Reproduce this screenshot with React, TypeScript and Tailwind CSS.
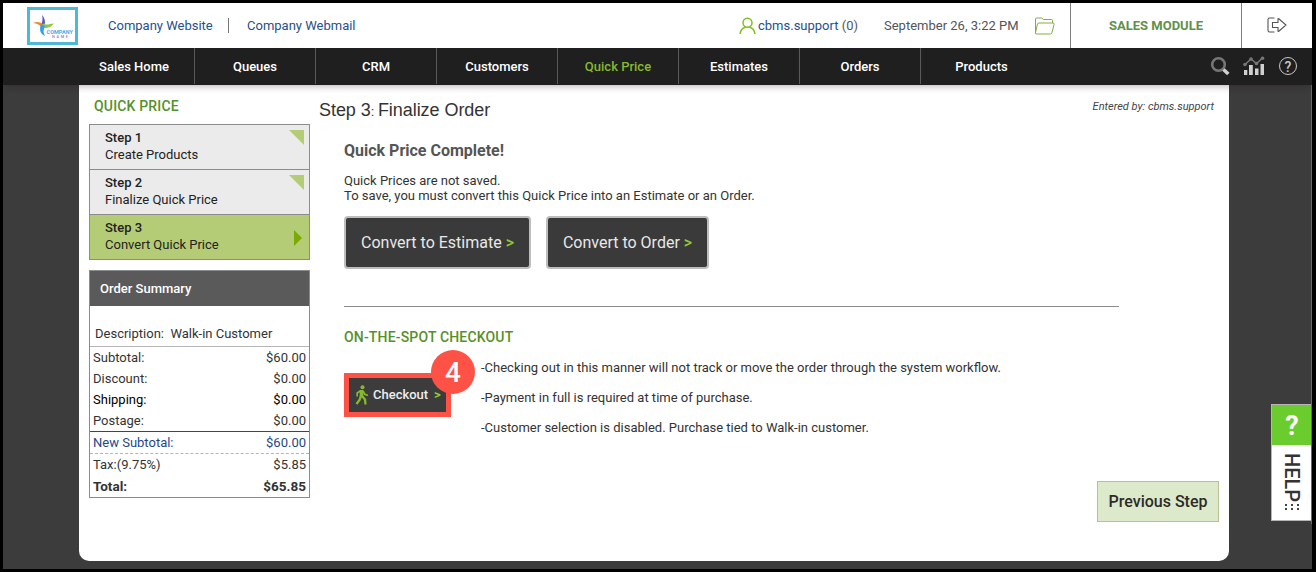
import type { ReactNode } from "react";

type NavItem = { label: string; active?: boolean };

const NAV: NavItem[] = [
  { label: "Sales Home" },
  { label: "Queues" },
  { label: "CRM" },
  { label: "Customers" },
  { label: "Quick Price", active: true },
  { label: "Estimates" },
  { label: "Orders" },
  { label: "Products" },
];

const STEPS = [
  { title: "Step 1", text: "Create Products", current: false },
  { title: "Step 2", text: "Finalize Quick Price", current: false },
  { title: "Step 3", text: "Convert Quick Price", current: true },
];

const CHECKOUT_NOTES = [
  "-Checking out in this manner will not track or move the order through the system workflow.",
  "-Payment in full is required at time of purchase.",
  "-Customer selection is disabled. Purchase tied to Walk-in customer.",
];

export default function App() {
  return (
    <div className="relative flex h-[572px] w-[1316px] flex-col overflow-hidden border-[3px] border-r-4 border-black bg-[#3c3c3c] font-['Roboto',sans-serif] text-[13px] text-[#333]">
      <TopBar />
      <MainNav />
      <main className="ml-[76px] flex h-[476px] w-[1150px] shrink-0 rounded-b-[10px] bg-white pl-[10px]">
        <Sidebar />
        <Content />
      </main>
      <HelpTab />
      <div className="absolute inset-y-[45px] right-0 w-px bg-[#686868]" />
    </div>
  );
}

function TopBar() {
  return (
    <header className="z-20 flex h-[45px] shrink-0 items-center bg-white pl-6">
      <CompanyLogo />
      <a className="ml-[30px] w-[105px] whitespace-nowrap text-[#26508c]">
        Company Website
      </a>
      <div className="mx-[15px] h-[15px] w-px bg-[#777]" />
      <a className="ml-[3px] w-[109px] whitespace-nowrap text-[#26508c]">
        Company Webmail
      </a>
      <div className="ml-auto flex h-full items-center">
        <UserIcon />
        <span className="ml-[2px] w-[126px] whitespace-nowrap text-[#555]">
          <span className="text-[#26508c]">cbms.support</span> (0)
        </span>
        <span className="w-[150px] whitespace-nowrap text-[#555]">
          September 26, 3:22 PM
        </span>
        <FolderIcon />
        <div className="ml-[15px] grid h-full w-[172px] place-items-center border-x border-[#808080] font-bold text-[#5f9148]">
          SALES MODULE
        </div>
        <div className="flex h-full w-[70px] items-center pb-[2px] pl-[25px]">
          <ExitIcon />
        </div>
      </div>
    </header>
  );
}

function MainNav() {
  return (
    <nav className="z-10 flex h-[37px] shrink-0 bg-[#1f1f1f] pl-[71px] text-white shadow-[0_1px_7px_rgba(40,20,30,0.35)]">
      {NAV.map((item, i) => (
        <div
          key={item.label}
          className={`flex h-9 w-[121px] items-center justify-center pt-[2px] font-medium ${
            i < NAV.length - 1 ? "border-r border-[#5a5a5a]" : ""
          } ${item.active ? "text-[#86b92e]" : ""}`}
        >
          {item.label}
        </div>
      ))}
      <div className="ml-auto flex items-center pr-[15px] pb-px">
        <SearchIcon />
        <ChartIcon />
        <HelpIcon />
      </div>
    </nav>
  );
}

function Sidebar() {
  return (
    <aside className="w-[221px] shrink-0">
      <h2 className="mt-3 ml-[5px] h-[27px] text-sm leading-[18px] font-medium tracking-[0.17px] text-[#56902a]">
        QUICK PRICE
      </h2>
      <div className="border border-b-0 border-[#8c8c8c]">
        {STEPS.map((step) => (
          <div
            key={step.title}
            className={`relative h-[45px] border-b border-[#8c8c8c] pt-[4px] pl-[15px] leading-[17px] text-[#222] ${
              step.current ? "bg-[#b5cc76]" : "bg-[#ebebeb]"
            }`}
          >
            <div className="font-medium">{step.title}</div>
            <div>{step.text}</div>
            {step.current ? (
              <svg className="absolute top-[15px] right-[7px]" width="8" height="16">
                <path d="M0 0l8 8-8 8z" fill="#79aa05" />
              </svg>
            ) : (
              <svg className="absolute top-[5px] right-[5px]" width="15" height="15">
                <path d="M0 0h15v15z" fill="#b5cc76" />
              </svg>
            )}
          </div>
        ))}
      </div>
      <OrderSummary />
    </aside>
  );
}

function SummaryRow({
  label,
  value,
  className,
}: {
  label: string;
  value: string;
  className: string;
}) {
  return (
    <div className={`flex items-center justify-between px-[3px] ${className}`}>
      <span>{label}</span>
      <span>{value}</span>
    </div>
  );
}

function OrderSummary() {
  return (
    <section className="mt-[10px] h-[228px] border border-[#8c8c8c]">
      <h3 className="h-[35px] bg-[#5a5a5a] pl-[10px] leading-[35px] font-medium text-white">
        Order Summary
      </h3>
      <div className="h-[41px] border-b border-[#b5b5b5] pt-[19px] pl-[5px] leading-[18px]">
        Description:&nbsp; Walk-in Customer
      </div>
      <SummaryRow label="Subtotal:" value="$60.00" className="h-[21px]" />
      <SummaryRow label="Discount:" value="$0.00" className="h-[21px]" />
      <SummaryRow label="Shipping:" value="$0.00" className="h-[21px] text-black" />
      <SummaryRow label="Postage:" value="$0.00" className="h-[21px]" />
      <SummaryRow
        label="New Subtotal:"
        value="$60.00"
        className="h-[23px] border-t border-b border-t-[#444] border-b-[#b5b5b5] [border-bottom-style:dashed] text-[#1f4788]"
      />
      <SummaryRow label="Tax:(9.75%)" value="$5.85" className="h-[21px]" />
      <SummaryRow label="Total:" value="$65.85" className="h-[22px] text-[13.5px] font-bold" />
    </section>
  );
}

function Content() {
  return (
    <div className="flex-1 pr-[10px] pl-[9px]">
      <div className="flex h-[49px] justify-between pt-[12px]">
        <h1 className="font-['Liberation_Sans',Arial,sans-serif] text-[18px] leading-[26px] tracking-[-0.05px] text-[#333]">
          Step 3<span className="text-[13px]">: </span>Finalize Order
        </h1>
        <span className="pt-px pr-[5px] text-[11px] leading-[18px] text-[#444] italic">
          Entered by: cbms.support
        </span>
      </div>
      <div className="pl-[25px]">
        <h2 className="pt-[7px] text-base leading-5 font-bold text-[#555]">
          Quick Price Complete!
        </h2>
        <p className="mt-[12px] leading-[15px]">
          Quick Prices are not saved.
          <br />
          To save, you must convert this Quick Price into an Estimate or an Order.
        </p>
        <div className="mt-[13px] flex gap-[15px]">
          <ConvertButton className="w-[187px]">Convert to Estimate</ConvertButton>
          <ConvertButton className="w-[163px]">Convert to Order</ConvertButton>
        </div>
        <div className="mt-[37px] h-px w-[775px] bg-[#8c8c8c]" />
        <h3 className="mt-[20px] text-sm leading-5 font-medium tracking-[0.17px] text-[#56902a]">
          ON-THE-SPOT CHECKOUT
        </h3>
        <div className="mt-[13px] flex">
          <div className="relative mt-[13px] h-[44px] w-[107px]">
            <button
              type="button"
              className="flex h-full w-full items-center border-[5px] border-[#ff5246] bg-[#3c3c3c] pl-[6px] font-medium text-[#eee]"
            >
              <WalkIcon />
              <span className="ml-[5px] w-[61px] text-left">Checkout</span>
              <span className="font-bold text-[#8fc935]">&gt;</span>
            </button>
            <span className="absolute -top-[23px] left-[87px] grid h-[44px] w-[44px] place-items-center rounded-full bg-[#ff5246] pt-[2px] text-[28px] leading-none font-medium text-white">
              4
            </span>
          </div>
          <div className="ml-[30px] space-y-[15px] leading-[15px]">
            {CHECKOUT_NOTES.map((note) => (
              <p key={note}>{note}</p>
            ))}
          </div>
        </div>
      </div>
      <div className="mt-[46px] flex justify-end">
        <button
          type="button"
          className="h-[41px] w-[122px] border border-[#b5c394] bg-[#dde9cb] text-base font-medium text-[#2b2b2b]"
        >
          Previous Step
        </button>
      </div>
    </div>
  );
}

function ConvertButton({
  className,
  children,
}: {
  className: string;
  children: ReactNode;
}) {
  return (
    <button
      type="button"
      className={`h-[53px] rounded-[4px] border-2 border-[#bdbdbd] bg-[#3a3a3a] text-base whitespace-nowrap text-[#e8e8e8] ${className}`}
    >
      {children} <span className="font-medium text-[#8fc935]">&gt;</span>
    </button>
  );
}

function HelpTab() {
  return (
    <div className="absolute top-[401px] right-0 h-[117px] w-[41px] border border-r-0 border-[#b5b5b5] bg-white">
      <div className="grid h-10 place-items-center bg-[#6bcd2d] pt-[2px] text-[27px] leading-none font-bold text-white">
        ?
      </div>
      <div className="mt-[6px] flex h-[53px] items-center justify-center">
        <span className="text-[20px] leading-none font-medium [writing-mode:vertical-rl]">
          HELP
        </span>
      </div>
      <svg className="mx-auto" width="16" height="8" fill="#444">
        <path d="M1 0h2v2H1zM7 0h2v2H7zM13 0h2v2h-2zM1 4h2v2H1zM7 4h2v2H7zM13 4h2v2h-2z" />
      </svg>
    </div>
  );
}

function CompanyLogo() {
  return (
    <div className="flex h-[38px] w-[51px] border-[3px] border-[#4fb8d5] bg-white">
      <svg width="45" height="32" viewBox="0 0 45 32">
        <path d="M12 5c3 3 3.500 7 2.500 10L11 15.500c1.500-4 2-6 1-10.500z" fill="#5457c5" />
        <path d="M3 13c4-2 8-1 11 2l-2 2.500c-3-3-5-4-9-4.500z" fill="#ee8b29" />
        <path d="M13 13.500c4 2 6 .5 11 0-3 4-7 5.500-12 3.500z" fill="#92c941" />
        <path d="M11 14l4 2c-1.500 4-2 6 0 10-5-2-6-7-4-12z" fill="#35a1e4" />
        <text x="16.500" y="23.500" fontFamily="Roboto" fontSize="5.500" fontWeight="700" fill="#54a8e2" textLength="26.500">
          COMPANY
        </text>
        <text x="22" y="28" fontFamily="Roboto" fontSize="3.800" fontWeight="500" fill="#8a73c9" textLength="16">
          NAME
        </text>
      </svg>
    </div>
  );
}

function UserIcon() {
  return (
    <svg width="17" height="18" viewBox="0 0 17 18" fill="none" stroke="#7ebf1b" strokeWidth="1.5">
      <circle cx="8.5" cy="5.7" r="4.5" />
      <path d="M1 17c.5-4 2.500-6 5.500-7M16 17c-.5-4-2.500-6-5.500-7" />
    </svg>
  );
}

function FolderIcon() {
  return (
    <svg width="21" height="18" viewBox="0 0 21 18" fill="none" stroke="#83ad42">
      <path d="M1.500 16.500V2q0-1 1-1h5l2 1.500h8q1 0 1 1v2.500M1.500 15.500l2-8.500q.3-1 1.500-1h14q1.500 0 1 1.500l-2 8q-.4 1.500-1.500 1.500H2.500q-1 0-1-1z" />
    </svg>
  );
}

function ExitIcon() {
  return (
    <svg width="20" height="16" viewBox="0 0 20 16" fill="none" stroke="#555" strokeWidth="1.1">
      <path d="M7.500 1H2.500Q1 1 1 2.500v11Q1 15 2.500 15h5M5.500 5.500h5.500V2q0-.8.8-.2L19 8l-7.200 6.200q-.8.6-.8-.2v-3.500H5.500z" />
    </svg>
  );
}

function SearchIcon() {
  return (
    <svg width="20" height="20" viewBox="0 0 20 20" fill="none">
      <circle cx="8.500" cy="8.500" r="6.300" stroke="#777" strokeWidth="2.600" />
      <path d="M13.500 13.500l4.800 4.500" stroke="#d0d0d0" strokeWidth="3.500" />
    </svg>
  );
}

function ChartIcon() {
  return (
    <svg className="ml-[13px]" width="22" height="20" viewBox="0 0 22 20">
      <path d="M1 14h3.300v5H1zM6 9h3.800v10H6zM12 12.500h3.500V19H12zM17.500 8H21v11h-3.500z" fill="#d0d0d0" />
      <path d="M2 8.500L8 3l5.500 4.500L19.500 2" fill="none" stroke="#777" strokeWidth="1.500" />
      <g fill="#777">
        <circle cx="2" cy="8.500" r="1.800" />
        <circle cx="8" cy="3" r="1.800" />
        <circle cx="13.500" cy="7.500" r="1.800" />
        <circle cx="19.500" cy="2.200" r="1.800" />
      </g>
    </svg>
  );
}

function HelpIcon() {
  return (
    <span className="ml-[14px] grid h-[18px] w-[18px] place-items-center rounded-full border-[1.5px] border-[#c8c8c8] pt-px text-[14px] leading-none font-medium text-[#c8c8c8]">
      ?
    </span>
  );
}

function WalkIcon() {
  return (
    <svg width="13" height="20" viewBox="0 0 13 20" fill="none" stroke="#86b92e">
      <circle cx="7.500" cy="2.300" r="2" fill="#86b92e" stroke="none" />
      <path d="M6.500 5v7" strokeWidth="3.600" />
      <path d="M6 5.500L2.200 8v3.500M8 6l1.800 3.200 3 1.200" strokeWidth="1.700" />
      <path d="M6 11l-1.500 4-3 4M7 11l3 3.500.5 5" strokeWidth="2.300" />
    </svg>
  );
}
